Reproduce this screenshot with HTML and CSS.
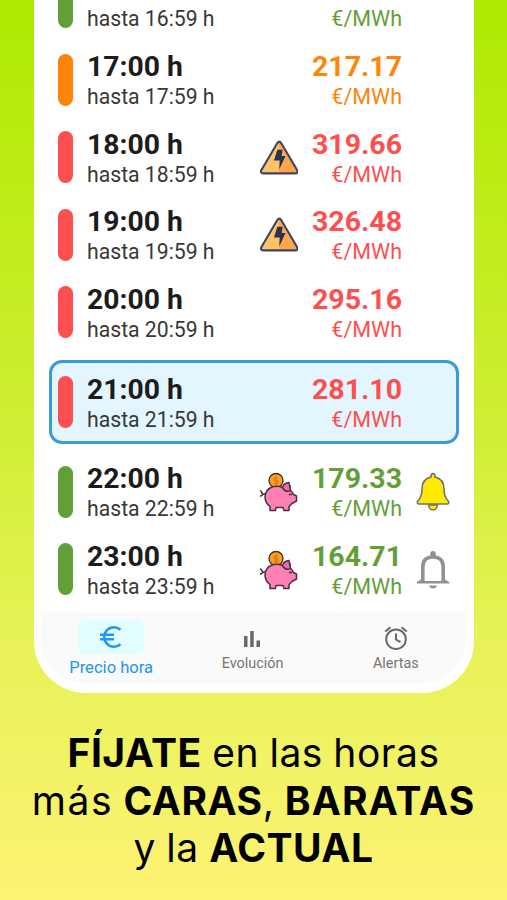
FILE: index.html
```
<!DOCTYPE html>
<html lang="es">

<head>
    <meta charset="utf-8">
    <title>Precio hora</title>
    <link rel="stylesheet" href="styles.css">
</head>

<body>
    <svg class="defs" width="0" height="0">
        <defs>
            <linearGradient id="amber" x1="0" y1="0" x2="1" y2="0">
                <stop offset="0.5" stop-color="#ffc266" />
                <stop offset="0.5" stop-color="#ffa64d" />
            </linearGradient>
        </defs>
        <symbol id="warn" viewBox="0 0 40 36">
            <path d="M18 3Q20 0 22 3L38.500 31Q40 34.500 36.500 34.500H3.500Q0 34.500 1.500 31Z" fill="url(#amber)" stroke="#3c4664" stroke-width="2.200" stroke-linejoin="round" />
            <path d="M18 10h5.500l-1 6.500h4l-6.500 14 .5-9.500h-6z" fill="#283150" />
        </symbol>
        <symbol id="pig" viewBox="0 0 40 40">
            <circle cx="17" cy="8.500" r="7" fill="#ff9f1c" stroke="#3b3030" stroke-width="1.300" />
            <path d="M19 6q-4-1-4 1t2.500 1.500q2.500 1 1.500 2.300t-4 .5M17 4.500v8.500" fill="none" stroke="#e0761a" stroke-width="1.200" />
            <path d="M7 21q-3 2.500-4 0t-2-2M1 24q2 .5 3-2.500" fill="none" stroke="#352b38" stroke-width="1.500" />
            <path d="M12 15.500C15 14 20 14 24 15.500L31 13.500V18Q33.500 20 34.500 22.500L37.500 24V29L33 31.500 30 34.500V38.500H25L24 35.500H17L16.500 38.500H11V34.500Q6 31 6 24.500 6.500 18 12 15.500Z" fill="#ff80b5" stroke="#493042" stroke-width="1.500" stroke-linejoin="round" />
            <path d="M23.500 16Q23.500 11.500 30 10.500L31.500 18.500Q27 21 23.500 16Z" fill="#f06aa4" stroke="#493042" stroke-width="1.400" />
            <path d="M30 23q1.500-1.500 3 0" fill="none" stroke="#493042" stroke-width="1.500" />
        </symbol>
        <symbol id="bell-on" viewBox="0 0 34 40">
            <path d="M12.500 33h9q-.5 5-4.500 5t-4.500-5z" fill="#ffea00" stroke="#707070" stroke-width="1.400" />
            <path d="M17 1.500q2 0 2 3.500 9 2 9 12 0 8 4.500 12.500.8 2.500-1.500 2.500h-28Q.7 32 1.500 29.500 6 25 6 17 6 7 15 5q0-3.500 2-3.500z" fill="#ffea00" stroke="#707070" stroke-width="1.600" />
        </symbol>
        <symbol id="bell-off" viewBox="0 0 34 40">
            <path d="M6.800 31V17Q6.800 7 17 7T27.200 17V31" fill="#fff" stroke="#929292" stroke-width="3.600" />
            <path d="M14.200 6.500V4Q14.200 1 17 1T19.800 4V6.500ZM.8 33.500V32L5 29.500V31H29V29.500L33.200 32V33.500Z" fill="#929292" />
            <path d="M13 35.500h8q-1 3-4 3t-4-3z" fill="#929292" />
        </symbol>
    </svg>

    <div class="phone">
        <ul class="hours">
            <li class="hour cheap scrolled">
                <i class="bar"></i>
                <div class="time"><span>hasta 16:59 h</span></div>
                <div class="mark"></div>
                <div class="price"><span>€/MWh</span></div>
            </li>
            <li class="hour medium">
                <i class="bar"></i>
                <div class="time"><b>17:00 h</b><span>hasta 17:59 h</span></div>
                <div class="mark"></div>
                <div class="price"><b>217.17</b><span>€/MWh</span></div>
            </li>
            <li class="hour high">
                <i class="bar"></i>
                <div class="time"><b>18:00 h</b><span>hasta 18:59 h</span></div>
                <div class="mark"><svg class="warn"><use href="#warn" /></svg></div>
                <div class="price"><b>319.66</b><span>€/MWh</span></div>
            </li>
            <li class="hour high">
                <i class="bar"></i>
                <div class="time"><b>19:00 h</b><span>hasta 19:59 h</span></div>
                <div class="mark"><svg class="warn"><use href="#warn" /></svg></div>
                <div class="price"><b>326.48</b><span>€/MWh</span></div>
            </li>
            <li class="hour high">
                <i class="bar"></i>
                <div class="time"><b>20:00 h</b><span>hasta 20:59 h</span></div>
                <div class="mark"></div>
                <div class="price"><b>295.16</b><span>€/MWh</span></div>
            </li>
            <li class="hour high current">
                <i class="bar"></i>
                <div class="time"><b>21:00 h</b><span>hasta 21:59 h</span></div>
                <div class="mark"></div>
                <div class="price"><b>281.10</b><span>€/MWh</span></div>
            </li>
            <li class="hour cheap">
                <i class="bar"></i>
                <div class="time"><b>22:00 h</b><span>hasta 22:59 h</span></div>
                <div class="mark"><svg class="pig"><use href="#pig" /></svg></div>
                <div class="price"><b>179.33</b><span>€/MWh</span></div>
                <svg class="bell"><use href="#bell-on" /></svg>
            </li>
            <li class="hour cheap">
                <i class="bar"></i>
                <div class="time"><b>23:00 h</b><span>hasta 23:59 h</span></div>
                <div class="mark"><svg class="pig"><use href="#pig" /></svg></div>
                <div class="price"><b>164.71</b><span>€/MWh</span></div>
                <svg class="bell"><use href="#bell-off" /></svg>
            </li>
        </ul>

        <div class="tabs">
            <div class="tab active">
                <div class="pill">
                    <svg width="24" height="24" viewBox="0 0 24 24"><path d="M21.500 4.800Q18.500 2.200 15 2.200A9.800 9.800 0 0 0 15 21.800Q18.500 21.800 21.500 19.200M1 9.700H15M1 14.300H15" fill="none" stroke="#2196f3" stroke-width="2.500" /></svg>
                </div>
                <span>Precio hora</span>
            </div>
            <div class="tab">
                <svg class="chart" width="18" height="18" viewBox="0 0 18 18"><path d="M1 6h3.500v11H1zM7.200 1h3.500v16H7.200zM13.500 10.500H17V17h-3.500z" fill="#686868" /></svg>
                <span>Evolución</span>
            </div>
            <div class="tab">
                <svg class="alarm" width="24" height="24" viewBox="0 0 24 24" fill="none" stroke="#686868" stroke-width="2"><circle cx="12" cy="13.200" r="9.800" /><path d="M12 7.500v6l4.500 2.700M1.200 5.500 6.500 1.200M22.800 5.500 17.500 1.200" /></svg>
                <span>Alertas</span>
            </div>
        </div>
    </div>

    <div class="slogan">
        <p class="line-1"><b>FÍJATE</b> en las horas</p>
        <p class="line-2"><span>más</span> <b>CARAS</b>, <b class="wide">BARATAS</b></p>
        <p class="line-3">y la <b>ACTUAL</b></p>
    </div>
</body>

</html>
```
FILE: styles.css
```
html,
body {
    margin: 0;
    padding: 0;
}

body {
    height: 900px;
    overflow: hidden;
    background: linear-gradient(#aeea00 0, #cdee30 400px, #e7f257 640px, #fdf374 900px);
    font-family: Roboto, "Liberation Sans", sans-serif;
}

.defs {
    display: block;
}

.phone {
    box-sizing: border-box;
    width: 440px;
    height: 693px;
    margin-left: 34px;
    padding: 0 8px 9px 7px;
    background: #fff;
    border-radius: 0 0 52px 52px;
    overflow: hidden;
}

.hours {
    list-style: none;
    margin: 0;
    padding: 0 7px 0 8px;
    height: 612px;
}

.hour {
    box-sizing: border-box;
    display: flex;
    align-items: center;
    height: 77.5px;
    padding-left: 9px;
}

.bar {
    width: 15px;
    height: 52px;
    margin-right: 14px;
    border-radius: 8px;
    background: currentColor;
}

/* first row, half scrolled out at the top */
.scrolled {
    height: 41px;
    align-items: flex-start;
}

.scrolled .bar {
    height: 28px;
    border-radius: 0 0 8px 8px;
}

.current {
    height: 84px;
    margin: 9px 0;
    padding-left: 6px;
    border: 3px solid #3b9bd3;
    border-radius: 13px;
    background: #e3f5fe;
}

.time {
    width: 170px;
    padding-top: 4px;
    color: #1c1c1c;
}

.time b,
.time span,
.price b,
.price span {
    display: block;
    white-space: nowrap;
}

.time b,
.price b {
    font-size: 28.3px;
    line-height: 30px;
}

.time span,
.price span {
    font-size: 21.2px;
    line-height: 29px;
}

.time span {
    color: #383838;
}

.mark {
    display: flex;
    justify-content: center;
    width: 44px;
}

.warn {
    width: 38.5px;
    height: 35px;
}

.pig {
    width: 40px;
    height: 40px;
    padding-top: 1px;
}

.price {
    width: 101px;
    padding-top: 4px;
    text-align: right;
}

.price b {
    font-size: 28.5px;
}

.price span {
    font-size: 21.5px;
}

.bell {
    width: 34px;
    height: 40px;
    margin-left: 14px;
    padding-top: 1px;
}

.cheap {
    color: #629f38;
}

.medium {
    color: #ff8408;
}

.high {
    color: #fd4f4f;
}

.tabs {
    display: flex;
    height: 72px;
    background: #fafafa;
    border-radius: 0 0 45px 45px;
}

.tab {
    box-sizing: border-box;
    flex: 1;
    display: flex;
    flex-direction: column;
    align-items: center;
    justify-content: flex-end;
    color: #757575;
    font-size: 14.4px;
}

.tab:last-child {
    padding-left: 3px;
}

.tab span {
    line-height: 18px;
    margin: 4px 0 11px;
}

.tab .chart {
    margin-bottom: 3px;
}

.tab .alarm {
    margin-bottom: 1px;
}

.tab.active {
    padding-right: 1px;
    color: #2196f3;
    font-size: 16.6px;
}

.tab.active span {
    margin: 5px 0 7px;
}

.pill {
    display: flex;
    align-items: center;
    justify-content: center;
    width: 66px;
    height: 34px;
    border-radius: 7px;
    background: #e0fdff;
}

.slogan {
    padding-top: 36px;
    color: #000;
    font-family: Inter, "Liberation Sans", sans-serif;
    font-size: 39px;
    line-height: 47.5px;
    letter-spacing: 0.5px;
    word-spacing: -1px;
    text-align: center;
}

.slogan p {
    margin: 0;
    white-space: nowrap;
}

.line-2 span {
    letter-spacing: 1.6px;
}

.slogan .wide {
    letter-spacing: 1.1px;
}
```
